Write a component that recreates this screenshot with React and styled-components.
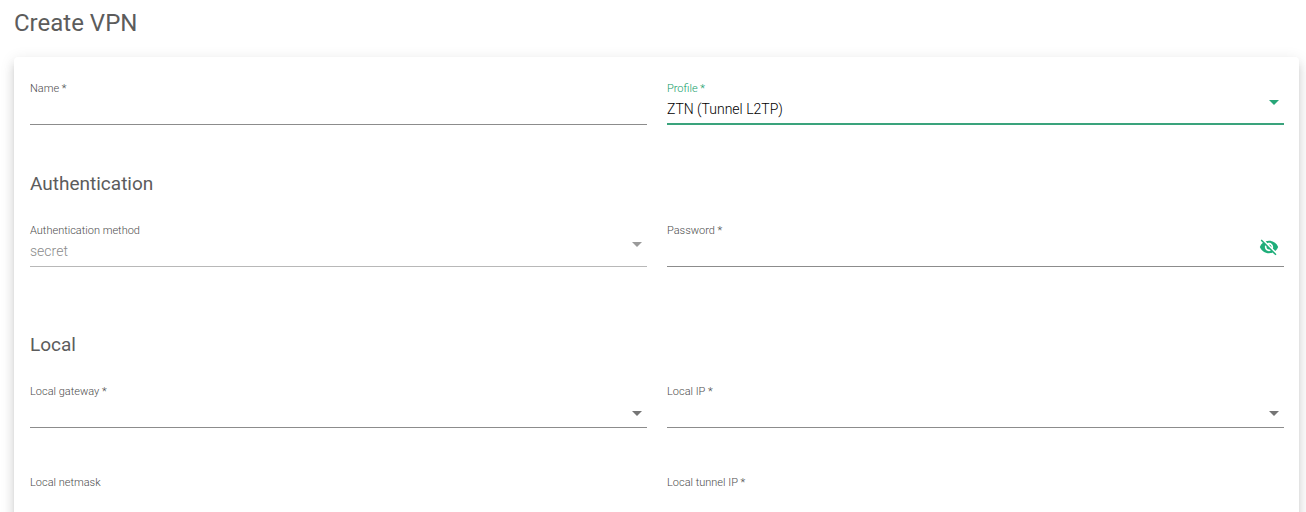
import React, { useState } from "react";
import styled, { createGlobalStyle, css } from "styled-components";
import { MdVisibility, MdVisibilityOff } from "react-icons/md";

function App() {
	const [profile, setProfile] = useState("l2tp");
	const [showPassword, setShowPassword] = useState(false);

	return (
		<>
			<GlobalStyle />
			<Page>
				<Title>Create VPN</Title>
				<Card>
					<Row>
						<TextField id="name" label="Name *" />
						<SelectField
							id="profile"
							label="Profile *"
							active
							value={profile}
							onChange={(e) => setProfile(e.target.value)}>
							<option value="l2tp">ZTN (Tunnel L2TP)</option>
						</SelectField>
					</Row>

					<Section>
						<SectionTitle>Authentication</SectionTitle>
						<Row>
							<SelectField
								id="method"
								label="Authentication method"
								defaultValue="secret"
								disabled>
								<option value="secret">secret</option>
							</SelectField>
							<TextField
								id="password"
								label="Password *"
								type={showPassword ? "text" : "password"}>
								<ToggleButton
									type="button"
									aria-label="Toggle password visibility"
									onClick={() => setShowPassword(!showPassword)}>
									{showPassword ? <MdVisibility /> : <MdVisibilityOff />}
								</ToggleButton>
							</TextField>
						</Row>
					</Section>

					<Section $spaced>
						<SectionTitle>Local</SectionTitle>
						<Row>
							<SelectField id="gateway" label="Local gateway *" empty />
							<SelectField id="local-ip" label="Local IP *" empty />
							<TextField id="netmask" label="Local netmask" />
							<TextField id="tunnel-ip" label="Local tunnel IP *" />
						</Row>
					</Section>
				</Card>
			</Page>
		</>
	);
}

function TextField({ id, label, children, ...rest }) {
	return (
		<Field>
			<Label htmlFor={id}>{label}</Label>
			<Control>
				<Input id={id} {...rest} />
				{children}
			</Control>
		</Field>
	);
}

function SelectField({ id, label, active, empty, children, ...rest }) {
	return (
		<Field>
			<Label htmlFor={id} $active={active}>
				{label}
			</Label>
			<Control $active={active} $disabled={rest.disabled}>
				<Select id={id} {...rest}>
					{children}
				</Select>
				<Arrow
					viewBox="0 0 10 5"
					aria-hidden="true"
					$active={active}
					$disabled={rest.disabled}
					$low={empty}>
					<path d="M0 0h10L5 5z" />
				</Arrow>
			</Control>
		</Field>
	);
}

export default App;

const GlobalStyle = createGlobalStyle`
	* {
		box-sizing: border-box;
	}

	body {
		margin: 0;
		background: #fff;
		font-family: Roboto, "Liberation Sans", sans-serif;
	}
`;

const Page = styled.main`
	padding: 7px 7px 24px 14px;
`;

const Title = styled.h1`
	margin: 0 0 18px;
	color: #5c5c5c;
	font-size: 24px;
	font-weight: 400;
	line-height: 32px;
`;

const Card = styled.form`
	padding: 24px 15px 24px 16px;
	border-radius: 4px;
	background: #fff;
	box-shadow: 0 5px 5px -3px rgba(0, 0, 0, 0.16),
		0 8px 10px 1px rgba(0, 0, 0, 0.1), 0 3px 14px 2px rgba(0, 0, 0, 0.08);
`;

const Section = styled.section`
	margin-top: ${({ $spaced }) => ($spaced ? "66px" : "47px")};
`;

const SectionTitle = styled.h2`
	margin: 0 0 27px;
	color: #5c5c5c;
	font-size: 19px;
	font-weight: 400;
	line-height: 24px;
`;

const Row = styled.div`
	display: grid;
	grid-template-columns: 1fr 1fr;
	gap: 47px 20px;
`;

const Field = styled.div`
	display: flex;
	flex-direction: column;
	min-width: 0;
`;

const Label = styled.label`
	color: ${({ $active }) => ($active ? "#0f9c68" : "#4c4c4c")};
	font-size: 11px;
	font-weight: 300;
	line-height: 16px;
`;

const Control = styled.div`
	display: flex;
	height: 28px;
	border-bottom: 1px solid #8c8c8c;

	${({ $disabled }) =>
		$disabled &&
		css`
			border-bottom-color: #b8b8b8;
		`}

	${({ $active }) =>
		$active &&
		css`
			border-bottom: 2px solid #3aa37c;
		`}
`;

const controlText = css`
	flex: 1;
	min-width: 0;
	height: 24px;
	padding: 0;
	border: none;
	outline: none;
	background: transparent;
	color: #000;
	font-family: inherit;
	font-size: 14px;
	font-weight: 300;
	line-height: 24px;
`;

const Input = styled.input`
	${controlText}
`;

const Select = styled.select`
	${controlText}
	appearance: none;

	&:disabled {
		color: #8c8c8c;
		opacity: 1;
	}
`;

const Arrow = styled.svg`
	flex: none;
	width: 10px;
	height: 5px;
	margin: ${({ $low }) => ($low ? "11px" : "3px")} 5px 0;
	fill: ${({ $active, $disabled }) =>
		$active ? "#27a678" : $disabled ? "#9a9a9a" : "#757575"};
`;

const ToggleButton = styled.button`
	display: flex;
	align-items: center;
	justify-content: center;
	width: 20px;
	height: 16px;
	margin-right: 5px;
	padding: 0;
	border: none;
	background: none;
	color: #1fae7a;
	font-size: 20px;
	cursor: pointer;

	svg {
		flex: none;
	}
`;
